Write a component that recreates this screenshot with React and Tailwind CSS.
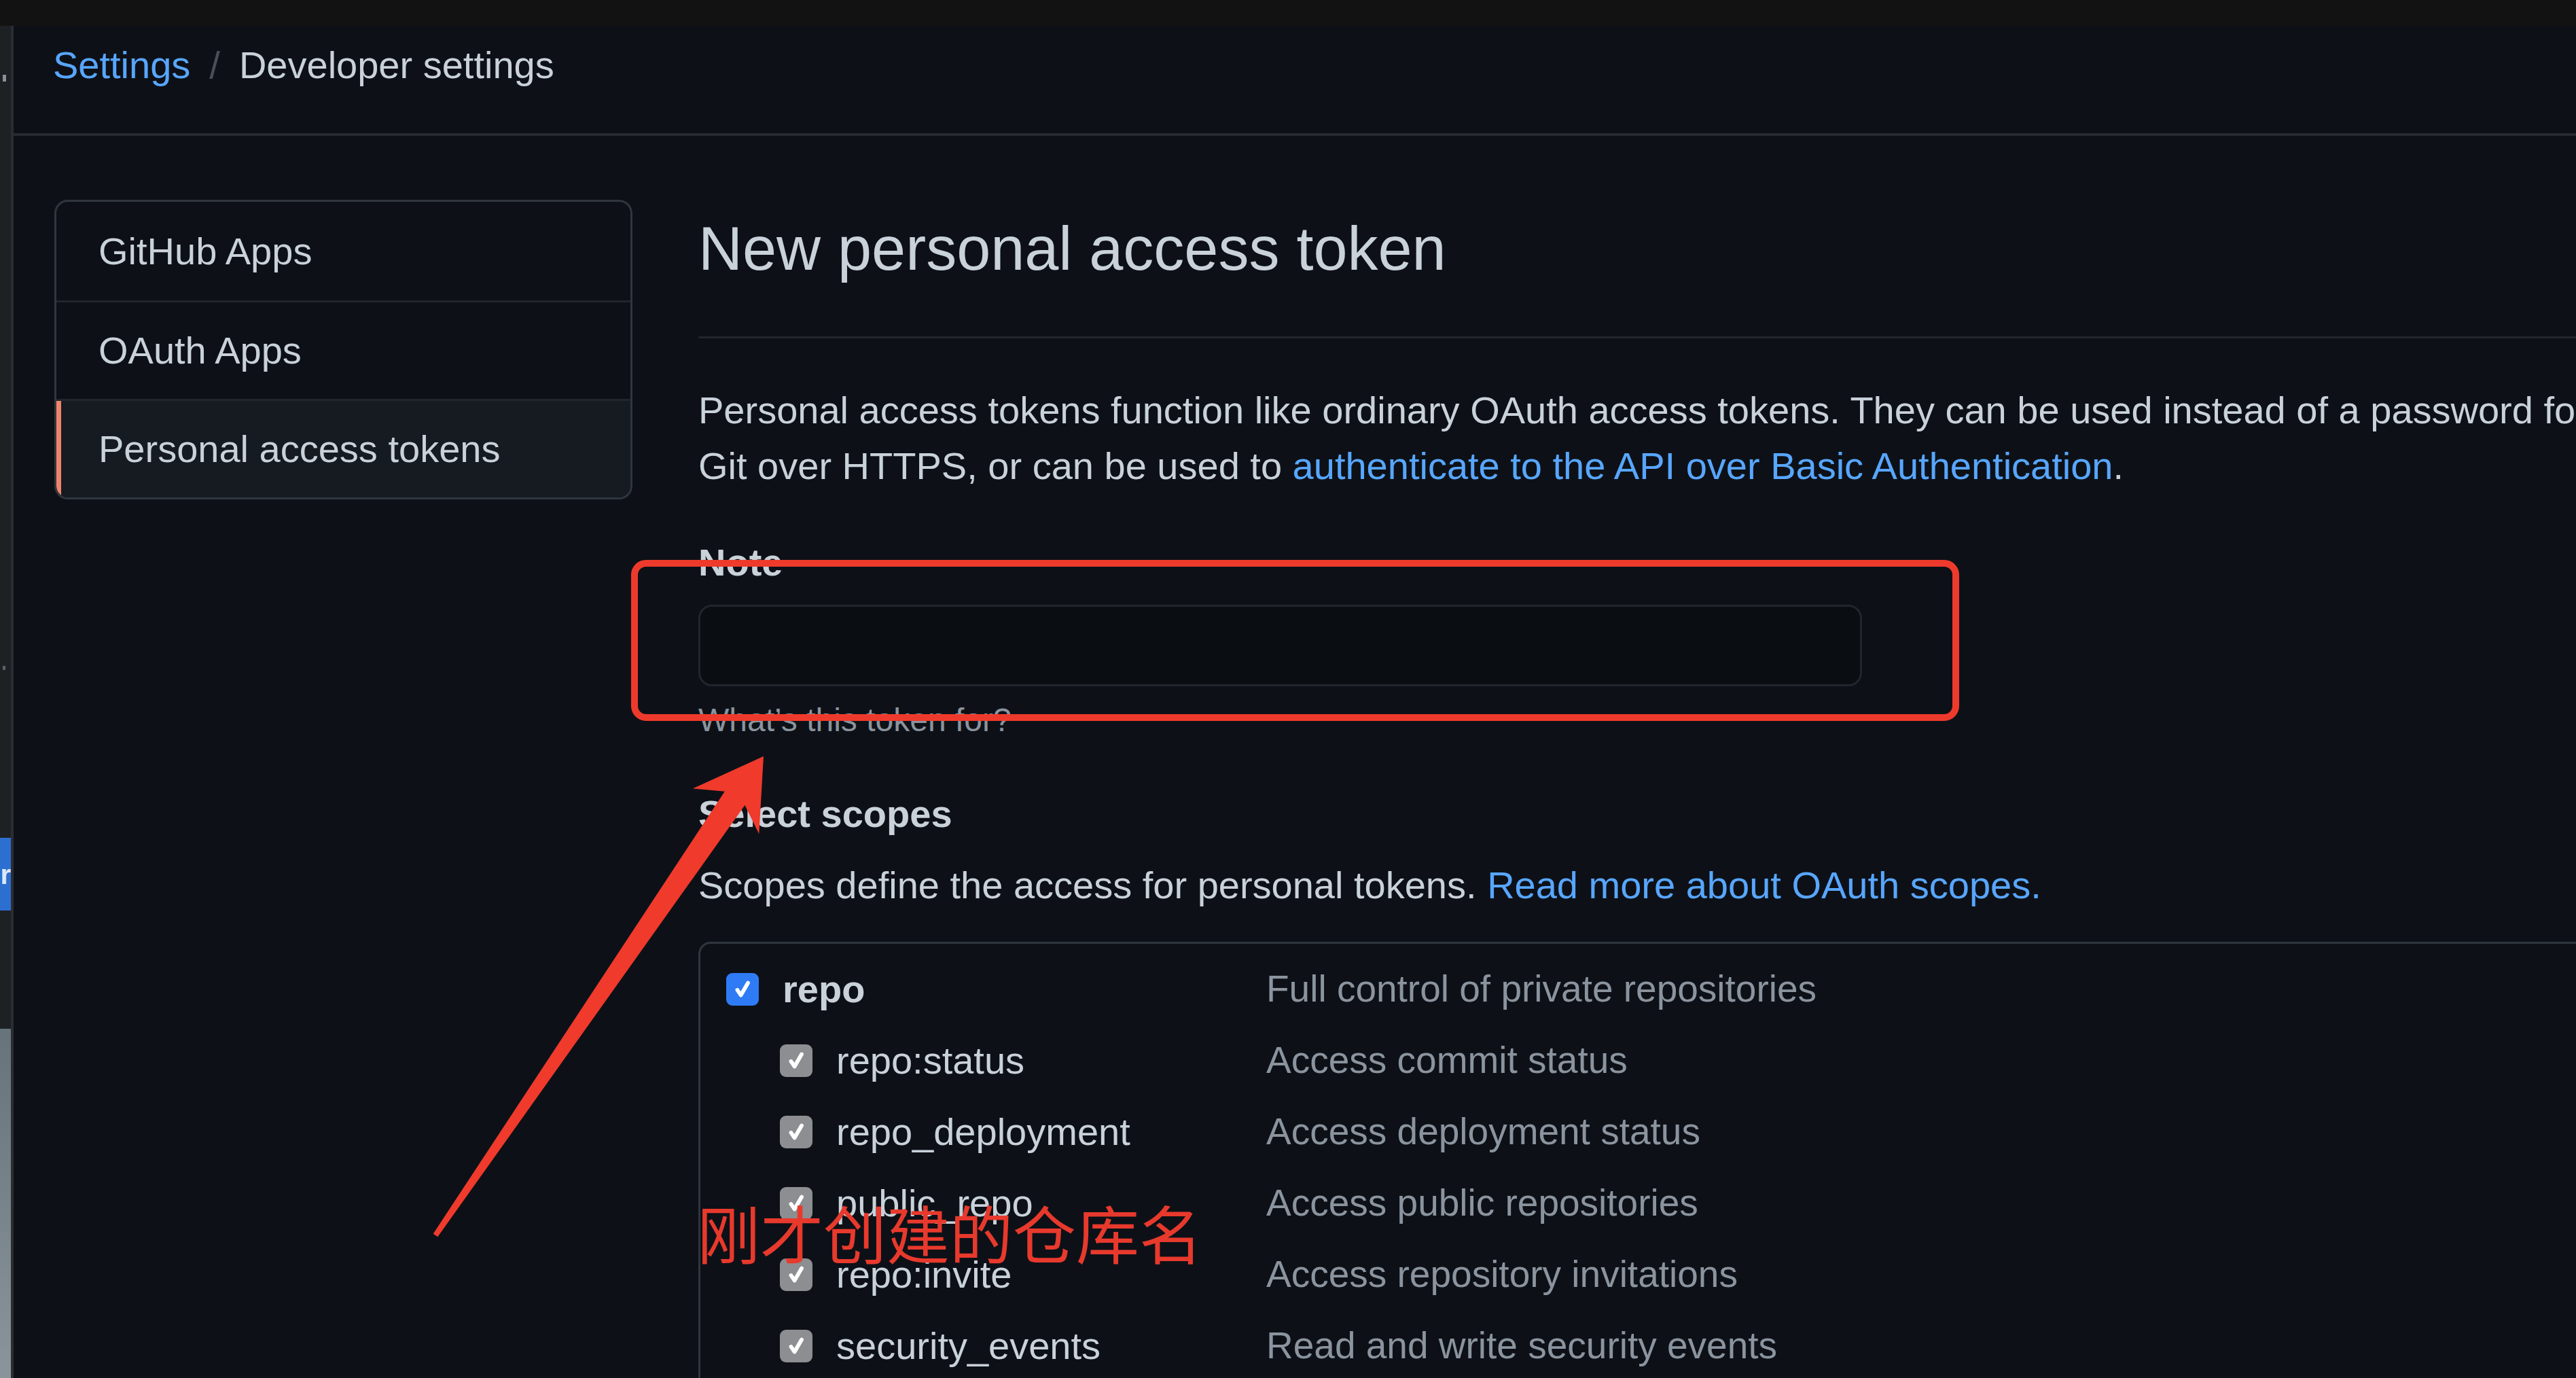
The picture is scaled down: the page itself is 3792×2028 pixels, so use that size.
import React from 'react';

const scopes = [
    { name: 'repo', desc: 'Full control of private repositories', main: true },
    { name: 'repo:status', desc: 'Access commit status' },
    { name: 'repo_deployment', desc: 'Access deployment status' },
    { name: 'public_repo', desc: 'Access public repositories' },
    { name: 'repo:invite', desc: 'Access repository invitations' },
    { name: 'security_events', desc: 'Read and write security events' },
];

const menu = ['GitHub Apps', 'OAuth Apps', 'Personal access tokens'];

function Check({ blue }) {
    return (
        <span
            className={`flex h-[48px] w-[48px] shrink-0 items-center justify-center rounded-[9px] ${
                blue ? 'bg-[#2f7bf5]' : 'bg-[#8c8e91]'
            }`}
        >
            <svg viewBox="0 0 16 16" className="h-[38px] w-[38px]" fill="none" stroke="#fff" strokeWidth="2.4" strokeLinecap="round" strokeLinejoin="round">
                <path d="M4.8 8.4l2.2 3.2 4.4-7.6" />
            </svg>
        </span>
    );
}

function LeftStrip() {
    // bit of another window peeking in on the left
    return (
        <div className="flex w-[20px] shrink-0 flex-col border-r-[4px] border-[#2a2d31] bg-[#1d2124]">
            <div className="h-[72px] shrink-0" />
            <div className="ml-[4px] h-[10px] w-[5px] shrink-0 bg-[#8a9096]" />
            <div className="h-[860px] shrink-0" />
            <div className="ml-[4px] h-[6px] w-[4px] shrink-0 bg-[#5c6166]" />
            <div className="h-[247px] shrink-0" />
            <div className="flex h-[107px] shrink-0 items-center justify-end overflow-hidden bg-[#2d6fd0] text-[40px] font-bold leading-none text-[#dfe9f7]">
                r
            </div>
            <div className="h-[174px] shrink-0" />
            <div className="flex-1 bg-gradient-to-b from-[#66737a] to-[#8a959b]" />
        </div>
    );
}

export default function App() {
    return (
        <div className="relative h-[2028px] w-[3792px] overflow-hidden bg-[#0d1117] font-['Liberation_Sans',Arial,sans-serif] text-[56px] text-[#c9d1d9]">
            <div className="h-[38px] bg-[#121212]" />
            <div className="flex h-[1990px]">
                <LeftStrip />
                <div className="min-w-0 flex-1">
                    <header className="h-[162px] border-b-[4px] border-[#262b31] pl-[58px] pt-[30px] leading-[56px] whitespace-nowrap">
                        <span className="text-[#58a6ff]">Settings</span>
                        <span className="mx-[28px] text-[#484f58]">/</span>
                        <span>Developer settings</span>
                    </header>

                    <div className="flex items-start pl-[60px] pt-[94px]">
                        <aside className="w-[851px] shrink-0 overflow-hidden rounded-[20px] border-[3px] border-[#30363d]">
                            {menu.map((item, i) => (
                                <div
                                    key={item}
                                    className={`flex h-[145px] items-center pl-[62px] whitespace-nowrap ${
                                        i > 0 ? 'border-t-[3px] border-[#21262d]' : ''
                                    } ${i === 2 ? 'bg-[#161b22] shadow-[inset_7px_0_0_#f0846b]' : ''}`}
                                >
                                    {item}
                                </div>
                            ))}
                        </aside>

                        <main className="ml-[97px] w-[2900px] shrink-0 pt-[26px]">
                            <h1 className="border-b-[3px] border-[#21262d] pb-[83px] text-[90px] font-normal leading-[92px]">
                                New personal access token
                            </h1>

                            <p className="mt-[65px] leading-[82px] whitespace-nowrap">
                                Personal access tokens function like ordinary OAuth access tokens. They can be used instead of a password for
                                <br />
                                Git over HTTPS, or can be used to{' '}
                                <span className="text-[#58a6ff]">authenticate to the API over Basic Authentication</span>.
                            </p>

                            <div className="mt-[60px] font-bold leading-[82px]">Note</div>
                            <div className="mt-[21px] h-[120px] w-[1713px] rounded-[20px] border-[3px] border-[#21262d] bg-[#0a0d12]" />
                            <div className="mt-[14px] text-[48px] leading-[72px] text-[#8b949e]">What’s this token for?</div>

                            <div className="mt-[61px] font-bold leading-[82px]">Select scopes</div>
                            <p className="mt-[23px] leading-[82px] whitespace-nowrap">
                                Scopes define the access for personal tokens.{' '}
                                <span className="text-[#58a6ff]">Read more about OAuth scopes.</span>
                            </p>

                            <div className="mt-[42px] h-[900px] rounded-[18px] border-[3px] border-[#30363d] pl-[38px] pt-[14px]">
                                {scopes.map((s) => (
                                    <div key={s.name} className="flex h-[105px] items-center whitespace-nowrap">
                                        <div className={`flex w-[795px] shrink-0 items-center gap-[35px] ${s.main ? '' : 'pl-[79px]'}`}>
                                            <Check blue={s.main} />
                                            <span className={s.main ? 'font-bold' : ''}>{s.name}</span>
                                        </div>
                                        <span className="text-[55px] text-[#8b949e]">{s.desc}</span>
                                    </div>
                                ))}
                            </div>
                        </main>
                    </div>
                </div>
            </div>

            {/* annotation layer */}
            <div className="absolute left-[929px] top-[824px] h-[237px] w-[1955px] rounded-[22px] border-[10px] border-[#ee3a2c]" />
            <svg className="pointer-events-none absolute left-0 top-0" width="3792" height="2028" viewBox="0 0 3792 2028">
                <polygon
                    fill="#ef3a2c"
                    points="637.7,1815.7 1066.8,1164.7 1019.9,1160.6 1124,1113 1117.3,1227.2 1096.5,1185.1 644.3,1820.3"
                />
            </svg>
            <div className="absolute left-[1026px] top-[1766px] whitespace-nowrap font-['Noto_Sans_CJK_SC',sans-serif] text-[93px] leading-[93px] text-[#e8392d]">
                刚才创建的仓库名
            </div>
        </div>
    );
}
